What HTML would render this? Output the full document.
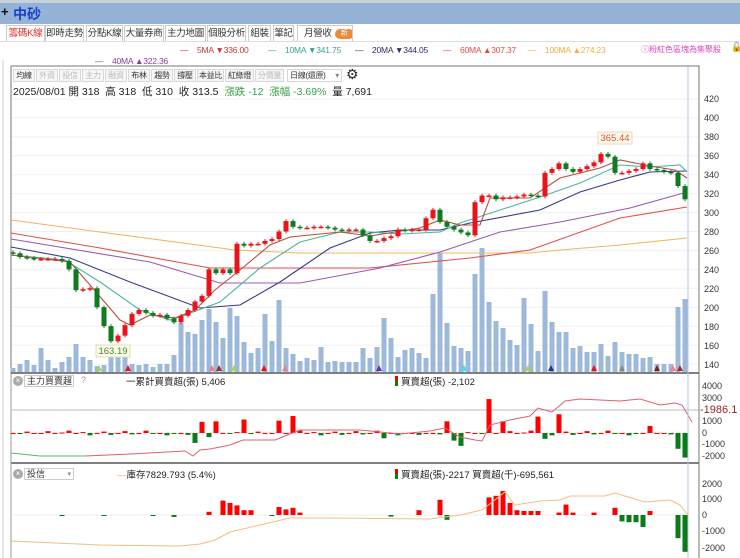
<!DOCTYPE html>
<html><head><meta charset="utf-8">
<style>
*{margin:0;padding:0;box-sizing:border-box}
body{width:740px;height:558px;overflow:hidden;background:#fff;font-family:"Liberation Sans","Noto Sans CJK TC",sans-serif;position:relative;color:#333}
.abs{position:absolute;white-space:nowrap}
#top{position:absolute;left:0;top:0;width:740px;height:24px;background:#94b3d7;border-top:3px solid #c8d0da}
.tab{position:absolute;top:25px;height:16px;font-size:9.5px;line-height:15px;text-align:center;border:1px solid #ccc;border-bottom:none;background:#fff;color:#333;white-space:nowrap;overflow:hidden;letter-spacing:-0.3px}
.btn{position:absolute;top:69px;height:13px;font-size:8px;line-height:12px;border:1px solid #d8d8d8;text-align:center;color:#333;background:#f6f6f6;white-space:nowrap;overflow:hidden;letter-spacing:-0.3px}
.btn.dis{color:#bbb}
.ax{position:absolute;left:704px;font-size:9px;color:#333}
.ax2{position:absolute;left:702px;font-size:9px;color:#333}
.ma{position:absolute;white-space:nowrap;font-size:8.5px;letter-spacing:-0.2px}
svg{position:absolute;left:0;top:0}
</style></head><body>
<div id="top"></div>
<div class="abs" style="left:1px;top:4px;font-size:13px;color:#111;font-weight:bold">+</div>
<div class="abs" style="left:13px;top:4px;font-size:14px;color:#1b3fd0;font-weight:bold">中砂</div>

<div class="tab" style="left:6px;width:39px;color:#e0322c">籌碼K線</div>
<div class="tab" style="left:45px;width:39px">即時走勢</div>
<div class="tab" style="left:86px;width:37px">分點K線</div>
<div class="tab" style="left:124px;width:40px">大量券商</div>
<div class="tab" style="left:165px;width:41px">主力地圖</div>
<div class="tab" style="left:207px;width:39px">個股分析</div>
<div class="tab" style="left:248px;width:23px">組裝</div>
<div class="tab" style="left:273px;width:21px">筆記</div>
<div class="tab" style="left:297px;width:56px;text-align:left;padding-left:6px">月營收<span style="display:inline-block;margin-left:3px;width:19px;height:10px;border-radius:5px;background:#f08a3a;color:#fff;font-size:7px;line-height:10px;text-align:center;vertical-align:1px">新</span></div>
<div class="abs" style="left:0;top:41px;width:740px;height:1px;background:#ddd"></div>

<div class="ma" style="left:180px;top:45px;color:#c23a3a">—&nbsp;&nbsp;&nbsp;&nbsp;5MA ▼336.00</div>
<div class="ma" style="left:268px;top:45px;color:#3a9f9a">—&nbsp;&nbsp;&nbsp;&nbsp;10MA ▼341.75</div>
<div class="ma" style="left:355px;top:45px;color:#2d2f6b">—&nbsp;&nbsp;&nbsp;&nbsp;20MA ▼344.05</div>
<div class="ma" style="left:443px;top:45px;color:#e24a4a">—&nbsp;&nbsp;&nbsp;&nbsp;60MA ▲307.37</div>
<div class="ma" style="left:528px;top:45px;color:#f0b040">—&nbsp;&nbsp;&nbsp;&nbsp;100MA ▲274.23</div>
<div class="ma" style="left:95px;top:56px;color:#8a3c9a">—&nbsp;&nbsp;&nbsp;&nbsp;40MA ▲322.36</div>
<div class="abs" style="left:641px;top:44px;font-size:8px;color:#e040c0">ⓘ粉紅色區塊為集聚股</div>
<div class="abs" style="left:731px;top:42px;font-size:9px;color:#000">🔓</div>

<div class="btn" style="left:13px;width:22px">均線</div>
<div class="btn dis" style="left:36px;width:22px">外資</div>
<div class="btn dis" style="left:59px;width:22px">投信</div>
<div class="btn dis" style="left:82px;width:22px">主力</div>
<div class="btn dis" style="left:105px;width:22px">融資</div>
<div class="btn" style="left:128px;width:22px">布林</div>
<div class="btn" style="left:151px;width:22px">趨勢</div>
<div class="btn" style="left:174px;width:22px">撐壓</div>
<div class="btn" style="left:197px;width:27px">本益比</div>
<div class="btn" style="left:225px;width:29px">紅綠燈</div>
<div class="btn dis" style="left:255px;width:29px">分價量</div>
<div class="btn" style="left:287px;width:55px;background:#fff;text-align:left;padding-left:2px">日線(還原)<span style="float:right;margin-right:2px;color:#888">▾</span></div>
<div class="abs" style="left:346px;top:66px;font-size:14px;color:#222">⚙</div>
<div class="abs" style="left:13px;top:84px;font-size:10.5px;color:#222">2025/08/01 開 318 &nbsp;高 318 &nbsp;低 310 &nbsp;收 313.5 &nbsp;<span style="color:#3aa04a">漲跌 -12 &nbsp;漲幅 -3.69%</span> &nbsp;量 7,691</div>

<svg width="740" height="558" id="sv">
<g id="grid"></g>
<rect x="11" y="66" width="688" height="307" fill="none" stroke="#777" stroke-width="1"/>
<line x1="3" y1="60" x2="3" y2="558" stroke="#ccc"/>
<g id="vol" fill="#9cb9d9"></g>
<g id="ma" fill="none" stroke-width="1.1">
<polyline stroke="#f0b860" points="11,220 100,232 235,250 300,253 530,253 560,250 620,245 687,238"/>
<polyline stroke="#e05050" points="11,233 100,248 210,268 370,268 470,258 530,250 620,218 687,207"/>
<polyline stroke="#9a5ab0" points="11,239 150,262 220,283 300,283 380,268 440,252 500,232 560,222 630,208 687,192"/>
<polyline stroke="#343a8a" points="11,247 70,258 130,282 200,308 240,305 280,282 330,248 370,233 400,230 440,230 470,223 540,210 580,192 620,180 650,172 687,171"/>
<polyline stroke="#4fb3a6" points="11,255 65,260 100,282 140,310 170,320 185,315 220,302 260,268 300,242 340,232 370,232 400,234 440,232 460,223 500,210 540,197 580,183 620,165 650,167 680,165 687,172"/>
<polyline stroke="#b8503a" points="11,255 70,262 90,285 120,320 130,325 150,315 175,318 195,310 215,290 240,270 270,245 290,237 340,232 370,236 395,232 420,228 440,220 460,225 480,225 490,198 530,198 560,178 600,168 620,160 650,166 675,170 687,178"/>
</g>
<g id="cd"></g>
<g id="tri"></g>
<rect x="96" y="345" width="34" height="12" fill="#fafbe8" stroke="#dde0b0"/>
<text x="113" y="354" font-size="9.5" fill="#4a8a3a" text-anchor="middle" font-family="Liberation Sans">163.19</text>
<rect x="598" y="132" width="34" height="12" fill="#fffaf0" stroke="#f0d8b0"/>
<text x="615" y="141" font-size="9.5" fill="#e0502a" text-anchor="middle" font-family="Liberation Sans">365.44</text>

<line x1="11" y1="373" x2="699" y2="373" stroke="#555" stroke-width="1.5"/>
<line x1="11" y1="463" x2="699" y2="463" stroke="#555" stroke-width="1.5"/>
<line x1="699" y1="373" x2="699" y2="558" stroke="#777"/>
<line x1="11" y1="373" x2="11" y2="558" stroke="#999"/>
<line x1="11" y1="410" x2="699" y2="410" stroke="#bbb"/>
<line x1="11" y1="433" x2="688" y2="433" stroke="#f4c0c0" stroke-dasharray="3,3"/>
<line x1="11" y1="515" x2="688" y2="515" stroke="#eee"/>
<g id="p2"></g>
<polyline fill="none" stroke="#5cb85c" stroke-width="1" points="11,453 40,456 85,456"/>
<polyline fill="none" stroke="#e06070" stroke-width="1" points="85,456 130,454 185,451 193,456 200,450 210,449 230,445 243,440 275,440 290,434 300,430 360,430 380,432 400,434 430,431 445,428 460,437 475,440 482,441 490,425 510,420 530,416 538,408 552,412 565,401 580,399 620,401 640,399 660,405 675,403 682,405 692,422"/>
<g id="p3"></g>
<polyline fill="none" stroke="#f0c080" stroke-width="1" points="11,541 100,545 180,546 200,544 215,540 230,532 260,525 290,518 330,518 430,519 460,515 482,510 505,492 515,505 540,501 560,500 570,496 605,496 615,493 645,502 670,500 680,505 688,515"/>
<line x1="688" y1="66" x2="688" y2="558" stroke="#b0c4e8" stroke-width="1"/>
</svg>

<div class="ax" style="top:94px">420</div><div class="ax" style="top:113px">400</div>
<div class="ax" style="top:132px">380</div><div class="ax" style="top:151px">360</div>
<div class="ax" style="top:170px">340</div><div class="ax" style="top:189px">320</div>
<div class="ax" style="top:208px">300</div><div class="ax" style="top:227px">280</div>
<div class="ax" style="top:246px">260</div><div class="ax" style="top:265px">240</div>
<div class="ax" style="top:284px">220</div><div class="ax" style="top:303px">200</div>
<div class="ax" style="top:322px">180</div><div class="ax" style="top:341px">160</div>
<div class="ax" style="top:360px">140</div>

<div class="ax2" style="top:381px">4000</div><div class="ax2" style="top:393px">3000</div>
<div class="abs" style="left:700px;top:404px;font-size:11px;color:#8a2a2a">-1986.1</div>
<div class="ax2" style="top:416px">1000</div><div class="ax2" style="top:428px">0</div>
<div class="ax2" style="top:439px">-1000</div><div class="ax2" style="top:451px">-2000</div>
<div class="ax2" style="top:479px">2000</div><div class="ax2" style="top:494px">1000</div>
<div class="ax2" style="top:510px">0</div><div class="ax2" style="top:526px">-1000</div>
<div class="ax2" style="top:543px">-2000</div>

<div class="abs" style="left:13px;top:376px;width:10px;height:10px;border-radius:5px;background:#aaa;color:#fff;font-size:8px;line-height:10px;text-align:center">×</div>
<div class="abs" style="left:24px;top:375px;width:50px;height:12px;border:1px solid #ccc;font-size:9px;line-height:11px;padding-left:2px">主力買賣超<span style="position:absolute;right:2px;color:#888;font-size:7px">▾</span></div>
<div class="abs" style="left:81px;top:375px;font-size:9px;color:#999">?</div>
<div class="abs" style="left:126px;top:374px;font-size:9.5px;color:#222">一累計買賣超(張) 5,406</div>
<div class="abs" style="left:395px;top:376px;width:3px;height:5px;background:#e00"></div><div class="abs" style="left:395px;top:381px;width:3px;height:5px;background:#080"></div>
<div class="abs" style="left:401px;top:374px;font-size:9.5px;color:#222">買賣超(張) -2,102</div>

<div class="abs" style="left:13px;top:469px;width:10px;height:10px;border-radius:5px;background:#aaa;color:#fff;font-size:8px;line-height:10px;text-align:center">×</div>
<div class="abs" style="left:24px;top:468px;width:50px;height:12px;border:1px solid #ccc;font-size:9px;line-height:11px;padding-left:2px">投信<span style="position:absolute;right:2px;color:#888;font-size:7px">▾</span></div>
<div class="abs" style="left:117px;top:467px;font-size:9.5px;color:#222"><span style="color:#f0b060">—</span>庫存7829.793 (5.4%)</div>
<div class="abs" style="left:395px;top:469px;width:3px;height:5px;background:#e00"></div><div class="abs" style="left:395px;top:474px;width:3px;height:5px;background:#080"></div>
<div class="abs" style="left:401px;top:467px;font-size:9.5px;color:#222">買賣超(張)-2217 買賣超(千)-695,561</div>

<script>
var NS="http://www.w3.org/2000/svg";
function R(g,x,y,w,h,c){var r=document.createElementNS(NS,"rect");r.setAttribute("x",x);r.setAttribute("y",y);r.setAttribute("width",w);r.setAttribute("height",Math.max(h,1));if(c)r.setAttribute("fill",c);document.getElementById(g).appendChild(r);}
function L(g,x1,y1,x2,y2,c){var l=document.createElementNS(NS,"line");l.setAttribute("x1",x1);l.setAttribute("y1",y1);l.setAttribute("x2",x2);l.setAttribute("y2",y2);l.setAttribute("stroke",c);document.getElementById(g).appendChild(l);}
for(var p=140;p<=420;p+=20){var yy=99+(420-p)*0.9464;L("grid",11,yy,699,yy,"#f0f0f0");}
var C=[257,253,252,251,251,251,251,249,240,218,219,220,200,180,164,170,181,193,197,194,191,192,188,184,191,197,206,212,240,236,240,236,267,265,267,267,270,272,280,291,285,284,284,285,285,284,282,281,282,282,276,270,270,273,275,282,281,282,282,294,303,290,285,282,279,276,311,318,318,314,316,316,317,319,318,317,342,346,352,346,343,346,349,353,362,359,342,342,344,346,352,346,345,343,342,328,314];
var V=[368,364,360,365,348,360,368,362,357,344,357,360,366,365,357,354,357,364,365,364,367,364,364,355,323,332,334,320,309,322,338,308,316,342,353,348,314,341,300,348,354,361,358,360,347,362,361,362,362,362,348,358,347,318,338,357,350,348,353,358,294,253,323,346,348,351,274,248,302,321,328,340,345,298,324,351,291,322,332,332,348,346,352,352,344,356,342,352,354,354,358,357,364,364,364,307,299];
function Y(p){return 99+(420-p)*0.9464;}
for(var i=0;i<C.length;i++){var x=13+7*i;R("vol",x-2.5,V[i],5,372-V[i]);
var o=i?C[i-1]:C[0]+1,c=C[i];var up=c>=o;var col=up?"#e8141a":"#0f7a20";
var hi=Math.max(o,c)+2,lo=Math.min(o,c)-2;L("cd",x,Y(hi),x,Y(lo),col);
var t=Y(Math.max(o,c)),b=Y(Math.min(o,c));R("cd",x-2.5,t,5,Math.max(b-t,1.5),col);}
var tr=[[99,"#a8d84a"],[128,"#e01818"],[212,"#f08080"],[219,"#a03030"],[234,"#a8d84a"],[264,"#e01818"],[285,"#f08080"],[379,"#7030a0"],[464,"#40e0f0"],[528,"#a8d84a"],[551,"#2030a0"],[594,"#e01818"],[622,"#888"],[657,"#802020"],[673,"#f08080"],[680,"#a03030"]];
tr.forEach(function(a){var q=document.createElementNS(NS,"polygon");q.setAttribute("points",(a[0]-3)+",371 "+(a[0]+3)+",371 "+a[0]+",365");q.setAttribute("fill",a[1]);document.getElementById("tri").appendChild(q);});
function snap(P){var o={};for(var k in P){var i=Math.round((k-13)/7);o[i]=P[k];}return o;}
var P2=snap({200:950,215:1000,243:1150,278:1050,293:1450,444:1000,486:2900,501:1000,537:1400,558:1600,651:600,193:-850,208:-350,386:-450,451:-650,458:-1100,543:-500,680:-1350,688:-2100});
for(var i=0;i<C.length;i++){var x=13+7*i,v=P2[i];if(v===undefined){v=((i*37)%11-5)*40;if(i%3==0)v=0;}
var h=v*0.0117;R("p2",x-2.5,v>0?433-h:433,5,Math.abs(h),v>=0?"#f00":"#0a7a1a");}
var P3=snap({208:200,220:900,228:750,236:600,243:300,250:300,272:200,279:500,286:350,293:450,300:150,422:300,443:950,486:1100,493:1200,500:1500,507:750,514:300,521:250,528:250,535:250,557:150,564:650,571:150,592:150,615:450,650:250,394:-100,437:-500,450:-300,621:-400,628:-450,636:-450,644:-750,680:-1450,688:-2300,59:-60,101:-60,150:-60,171:-120,273:-60});
for(var i=0;i<C.length;i++){var x=13+7*i,v=P3[i];if(v===undefined)continue;var h=v*0.016;R("p3",x-2.5,v>0?515-h:515,5,Math.abs(h),v>=0?"#f00":"#0a7a1a");}
</script>
</body></html>
